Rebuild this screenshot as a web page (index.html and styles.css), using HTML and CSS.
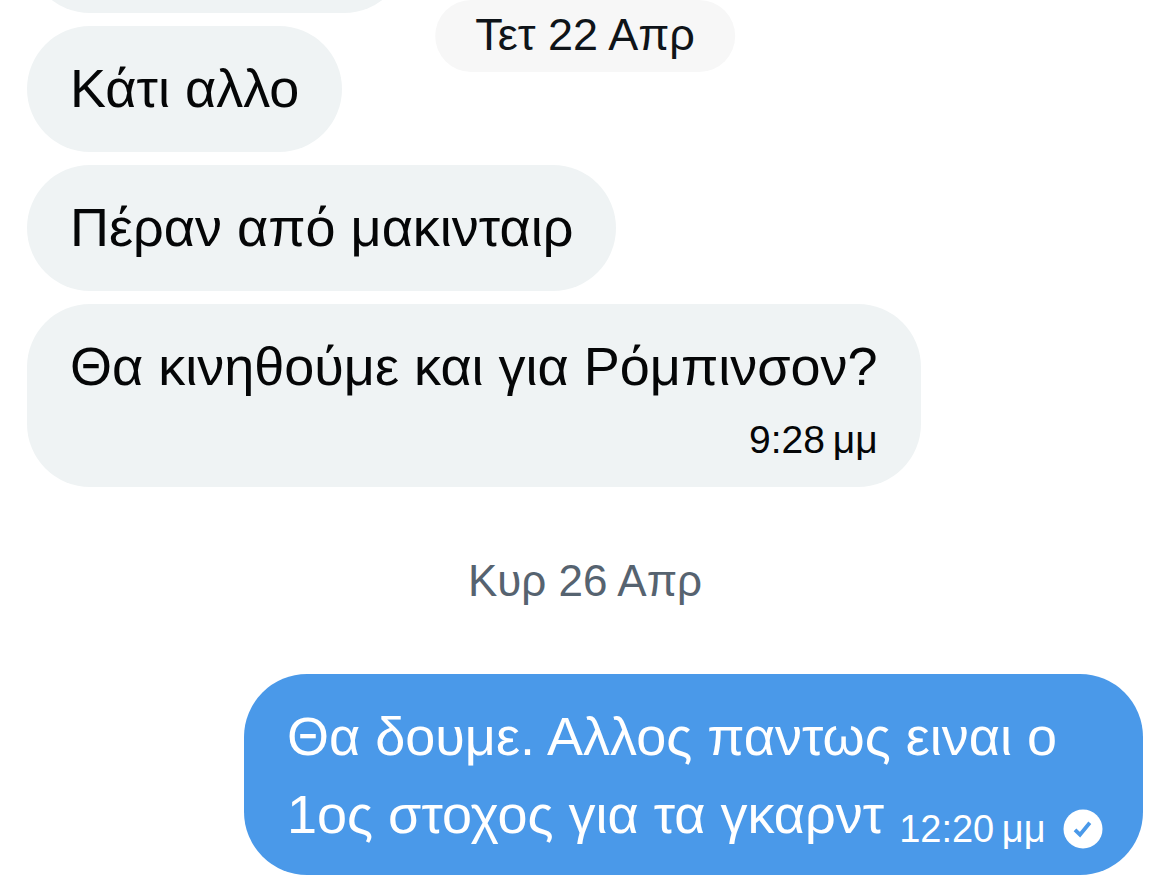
FILE: index.html
```html
<!DOCTYPE html>
<html lang="el">
<head>
<meta charset="utf-8">
<meta name="viewport" content="width=device-width, initial-scale=1">
<title>Συνομιλία</title>
<link rel="stylesheet" href="styles.css">
</head>
<body>
<main class="chat">
  <div class="date-pill">Τετ 22 Απρ</div>
  <div class="bubble received clipped"></div>
  <div class="bubble received">Κάτι αλλο</div>
  <div class="bubble received">Πέραν από μακινταιρ</div>
  <div class="bubble received timed">Θα κινηθούμε και για Ρόμπινσον?<time class="time">9:28&#8201;μμ</time></div>
  <div class="date">Κυρ 26 Απρ</div>
  <div class="bubble sent">Θα δουμε. Αλλος παντως ειναι ο 1ος στοχος για τα γκαρντ
    <span class="meta"><time>12:20&#8201;μμ</time>
      <svg class="status" viewBox="0 0 40 40" role="img" aria-label="Στάλθηκε"><circle cx="20" cy="20" r="19.5" fill="#fff"/><path d="M12 20.8l5 4.9 9.8-12" fill="none" stroke="#4a99e9" stroke-width="3.8"/></svg>
    </span>
  </div>
</main>
</body>
</html>
```
FILE: styles.css
```css
* { box-sizing: border-box; }
body { margin: 0; background: #fff; color: #050607; font-family: "Liberation Sans", Arial, sans-serif; }
.chat { position: relative; display: flex; flex-direction: column; align-items: flex-start; gap: 13px; padding: 0 27px 11px; overflow: hidden; }
.date-pill { position: absolute; top: 0; left: 50%; transform: translateX(-50%); padding: 6px 40px 9px; border-radius: 36px; background: #f7f7f7; color: #0f1419; font-size: 45px; line-height: 57px; white-space: nowrap; }
.bubble { border-radius: 63px; padding: 23px 43px 25px; font-size: 54px; line-height: 78px; }
.received { background: #eff3f4; }
.clipped { width: 380px; height: 126px; margin-top: -113px; }
.timed { display: flex; flex-direction: column; padding-bottom: 12px; }
.time { align-self: flex-end; font-size: 39px; line-height: 70px; }
.date { align-self: center; margin: 52px 0; color: #566370; font-size: 44px; line-height: 57px; }
.sent { align-self: flex-end; max-width: 899px; background: #4a99e9; color: #fff; padding: 23px 36px 22px 43px; }
.meta { display: inline-flex; vertical-align: bottom; align-items: center; gap: 17px; font-size: 38px; line-height: 48px; white-space: nowrap; }
.status { width: 40px; height: 40px; }
```
